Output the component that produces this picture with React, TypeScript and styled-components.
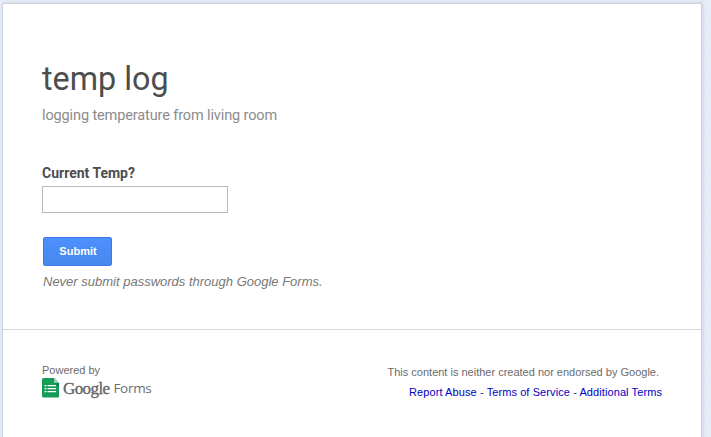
import React from "react";
import styled, { createGlobalStyle } from "styled-components";

const GlobalStyle = createGlobalStyle`
  * { box-sizing: border-box; }
  body { margin: 0; background: #e6ebf7; font-family: "Liberation Sans", Arial, sans-serif; overflow: hidden; }
`;

const Page = styled.div`
  height: 437px;
  padding: 4px 10px 0 3px;
  overflow: hidden;
  background: repeating-linear-gradient(135deg, #e6ebf7 0 2px, #e8edf8 2px 4px);
`;

const Card = styled.main`
  height: 450px;
  background: #fff;
  box-shadow: 0 0 0 1px #cbd3de, 1px 0 3px 1px rgba(110, 122, 150, 0.25);
`;

const FormBody = styled.form`
  display: flex;
  flex-direction: column;
  align-items: flex-start;
  height: 326px;
  padding: 55px 39px 0;
  border-bottom: 1px solid #d8d8d8;
`;

const Title = styled.h1`
  margin: 0;
  font: 400 32.3px/40px Roboto, sans-serif;
  color: #4d4d4d;
`;

const Description = styled.p`
  margin: 8px 0 0;
  font: 400 14.5px/18px Roboto, sans-serif;
  letter-spacing: -0.12px;
  color: #8b8b8b;
`;

const Label = styled.label`
  margin-top: 39px;
  font: 700 14px/18px Roboto, sans-serif;
  color: #4d4d4d;
`;

const Input = styled.input`
  width: 186px;
  height: 27px;
  margin-top: 4px;
  padding: 3px 6px;
  border: 1px solid #b9b9b9;
  border-radius: 0;
  outline: none;
  background: #fff;
`;

const SubmitButton = styled.button`
  width: 69px;
  height: 29px;
  margin: 24px 0 0 1px;
  padding: 0 0 0 1px;
  border: 1px solid #3a79e8;
  border-radius: 2px;
  background: linear-gradient(#4d90fe, #4787ed);
  font: 700 11px/27px "Liberation Sans", Arial, sans-serif;
  color: #fff;
`;

const Warning = styled.p`
  margin: 8px 0 0 1px;
  font: italic 13px/16px "Liberation Sans", Arial, sans-serif;
  color: #777;
`;

const Footer = styled.footer`
  display: flex;
  justify-content: space-between;
  padding: 33px 39px 0;
  font-size: 11px;
  line-height: 14px;
  color: #6b6b6b;
`;

const Brand = styled.div`
  display: flex;
  flex-direction: column;
`;

const Logo = styled.div`
  display: flex;
  align-items: flex-start;
  height: 22px;
  margin-top: 1px;
`;

const GoogleWord = styled.span`
  margin: 1px 0 0 3px;
  font: 400 17px/20px "Liberation Serif", serif;
  letter-spacing: -0.6px;
  color: #666;
  -webkit-text-stroke: 0.35px #666;
`;

const FormsWord = styled.span`
  margin: 0 0 0 4px;
  font: 400 13.5px/20px "Open Sans", sans-serif;
  letter-spacing: -0.3px;
  color: #6d6d6d;
`;

const Legal = styled.div`
  display: flex;
  flex-direction: column;
  align-items: flex-end;
  padding-top: 2px;
`;

const Disclaimer = styled.span`
  margin-right: 3px;
`;

const Links = styled.nav`
  margin-top: 6px;
  letter-spacing: 0.09px;
  color: #1a1aa8;
`;

const Link = styled.a`
  color: #0000c4;
  text-decoration: none;
`;

const SheetIcon = () => (
  <svg width="18" height="20" viewBox="0 0 18 20">
    <path d="M1.500 0H12l5 5v13.500a1 1 0 0 1-1 1H1.500a1.500 1.500 0 0 1-1.500-1.500V1.500A1.500 1.500 0 0 1 1.500 0Z" fill="#169c59" />
    <path d="M12 0l5 5h-5Z" fill="#8bd0aa" />
    <path d="M12 5h5v4Z" fill="#0e8147" />
    <path d="M2.500 7h2v1.300H2.500ZM5.500 7H14v1.300H5.500ZM2.500 10h2v1.300H2.500ZM5.500 10H14v1.300H5.500ZM2.500 13h2v1.300H2.500ZM5.500 13H14v1.300H5.500Z" fill="#fff" />
  </svg>
);

export default function App() {
  return (
    <>
      <GlobalStyle />
      <Page>
        <Card>
          <FormBody onSubmit={(e) => e.preventDefault()}>
            <Title>temp log</Title>
            <Description>logging temperature from living room</Description>
            <Label htmlFor="temp">Current Temp?</Label>
            <Input id="temp" type="text" />
            <SubmitButton type="submit">Submit</SubmitButton>
            <Warning>Never submit passwords through Google Forms.</Warning>
          </FormBody>
          <Footer>
            <Brand>
              <span>Powered by</span>
              <Logo>
                <SheetIcon />
                <GoogleWord>Google</GoogleWord>
                <FormsWord>Forms</FormsWord>
              </Logo>
            </Brand>
            <Legal>
              <Disclaimer>This content is neither created nor endorsed by Google.</Disclaimer>
              <Links>
                <Link href="#">Report Abuse</Link> - <Link href="#">Terms of Service</Link> - <Link href="#">Additional Terms</Link>
              </Links>
            </Legal>
          </Footer>
        </Card>
      </Page>
    </>
  );
}
